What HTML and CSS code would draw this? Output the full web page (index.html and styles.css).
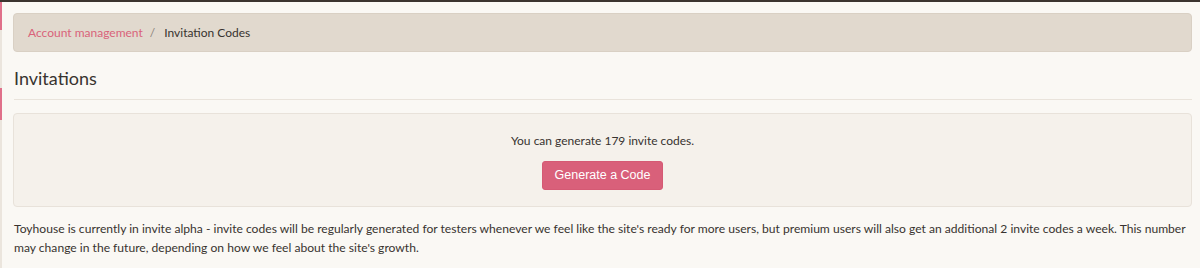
FILE: index.html
```html
<!DOCTYPE html>
<html lang="en">
<head>
    <meta charset="UTF-8">
    <meta name="viewport" content="width=device-width, initial-scale=1.0">
    <title>Invitation Codes</title>
    <link rel="stylesheet" href="styles.css">
</head>
<body>
    <div class="page">
        <div class="edge">
            <span class="edge-pink top"></span>
            <span class="edge-light mid"></span>
            <span class="edge-pink lower"></span>
            <span class="edge-light rest"></span>
        </div>
        <main class="content">
            <ol class="breadcrumb">
                <li><a href="#">Account management</a></li>
                <li class="active">Invitation Codes</li>
            </ol>
            <h1 class="page-title">Invitations</h1>
            <div class="well">
                <p>You can generate 179 invite codes.</p>
                <button class="btn-primary">Generate a Code</button>
            </div>
            <p class="note">Toyhouse is currently in invite alpha - invite codes will be regularly generated for testers whenever we feel like the site's ready for more users, but premium users will also get an additional 2 invite codes a week. This number may change in the future, depending on how we feel about the site's growth.</p>
        </main>
    </div>
</body>
</html>
```

FILE: styles.css
```css
/* Page */
html, body {
  margin: 0;
  background-color: #faf8f4;
}

body {
  font-family: Lato, "Open Sans", sans-serif;
  font-size: 12px;
  color: #38332f;
  border-top: 2px solid #3b342f;
}

.page {
  display: flex;
  min-height: 266px;
}

/* Left edge strip */
.edge {
  width: 2px;
  display: flex;
  flex-direction: column;
}

.edge span {
  display: block;
}

.edge-pink {
  background-color: #e0708a;
}

.edge-light {
  background-color: #ebe5dd;
}

.top { height: 28px; }
.mid { height: 58px; }
.lower { height: 32px; }
.rest { flex: 1; }

.content {
  flex: 1;
  padding: 11px 8px 0 11px;
}

/* Breadcrumb */
.breadcrumb {
  display: flex;
  list-style: none;
  margin: 0;
  padding: 8px 14px;
  line-height: 21px;
  background-color: #e1d9ce;
  border: 1px solid #d9d0c4;
  border-radius: 4px;
}

.breadcrumb a {
  color: #d9637a;
  text-decoration: none;
}

.breadcrumb li + li::before {
  content: "/";
  padding: 0 9px 0 7px;
  color: #8a817a;
}

.breadcrumb .active {
  color: #38332f;
}

/* Heading */
.page-title {
  margin: 14px 0 0 1px;
  padding-bottom: 9px;
  font-size: 18px;
  font-weight: 400;
  line-height: 24px;
  border-bottom: 1px solid #e9e3db;
}

/* Well */
.well {
  margin-top: 13px;
  padding: 17px 0 16px;
  text-align: center;
  background-color: #f5f1eb;
  border: 1px solid #e8e2da;
  border-radius: 4px;
}

.well p {
  margin: 0 0 10px;
  line-height: 20px;
}

.btn-primary {
  padding: 6px 12px;
  font-family: "Liberation Sans", Arial, sans-serif;
  font-size: 12.5px;
  line-height: 15px;
  color: #fff;
  background-color: #d9607a;
  border: 1px solid #d55a74;
  border-radius: 3px;
  cursor: pointer;
}

/* Note */
.note {
  margin: 12px 0 0 1px;
  font-size: 12.1px;
  line-height: 19px;
}
```
